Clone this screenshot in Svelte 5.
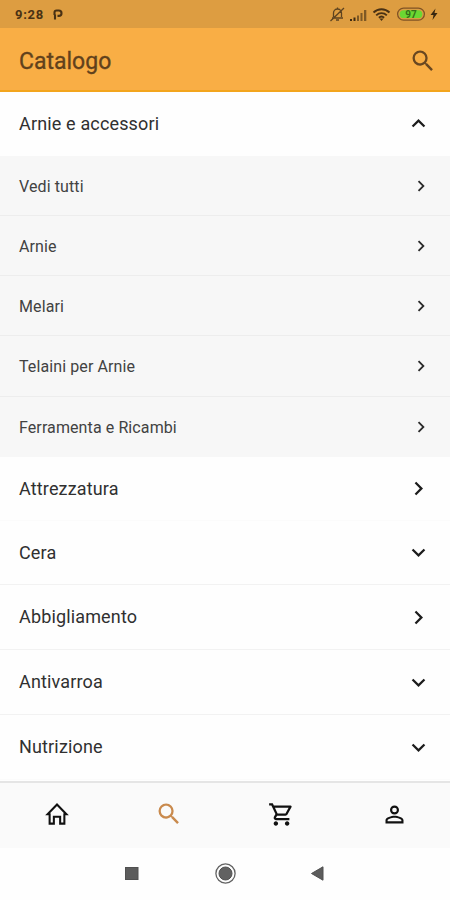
<script>
  const rows = [
    { label: 'Arnie e accessori', dir: 'up', h: 64 },
    { label: 'Vedi tutti', sub: true, dir: 'right', h: 60 },
    { label: 'Arnie', sub: true, dir: 'right', h: 60 },
    { label: 'Melari', sub: true, dir: 'right', h: 60 },
    { label: 'Telaini per Arnie', sub: true, dir: 'right', h: 61 },
    { label: 'Ferramenta e Ricambi', sub: true, last: true, dir: 'right', h: 60 },
    { label: 'Attrezzatura', dir: 'right', h: 64, faint: true },
    { label: 'Cera', dir: 'down', h: 64 },
    { label: 'Abbigliamento', dir: 'right', h: 65 },
    { label: 'Antivarroa', dir: 'down', h: 65 },
    { label: 'Nutrizione', dir: 'down', h: 65, faint: true }
  ];
  const chevrons = {
    up: 'M12 8l-6 6 1.41 1.41L12 10.83l4.59 4.58L18 14z',
    down: 'M16.59 8.59L12 13.17 7.41 8.59 6 10l6 6 6-6z',
    right: 'M10 6L8.59 7.41 13.17 12l-4.58 4.59L10 18l6-6z'
  };
  const searchPath =
    'M15.5 14h-.79l-.28-.27A6.471 6.471 0 0 0 16 9.5 6.5 6.5 0 1 0 9.5 16c1.61 0 3.09-.59 4.23-1.57l.27.28v.79l5 4.99L20.49 19l-4.99-5zm-6 0C7.01 14 5 11.99 5 9.5S7.01 5 9.5 5 14 7.01 14 9.5 11.99 14 9.5 14z';
  const tabs = [
    { name: 'Home', size: 26, outline: true, d: 'M3.300 12.300h1.900V20.900h3.900v-6.300h5.800v6.300h3.900v-8.600h1.900L12 3.200z' },
    { name: 'Cerca', size: 28, active: true, d: searchPath },
    { name: 'Carrello', size: 27, d: 'M15.55 13c.75 0 1.41-.41 1.75-1.03l3.58-6.49A.996.996 0 0 0 20.01 4H5.21l-.94-2H1v2h2l3.6 7.59-1.35 2.44C4.52 15.37 5.48 17 7 17h12v-2H7l1.1-2h7.45zM6.16 6h12.15l-2.76 5H8.53L6.16 6zM7 18c-1.1 0-1.99.9-1.99 2S5.9 22 7 22s2-.9 2-2-.9-2-2-2zm10 0c-1.1 0-1.99.9-1.99 2s.89 2 1.99 2 2-.9 2-2-.9-2-2-2z' },
    { name: 'Profilo', size: 27, d: 'M12 5.9a2.1 2.1 0 1 1 0 4.2 2.1 2.1 0 0 1 0-4.2m0 9c2.97 0 6.1 1.46 6.1 2.1v1.1H5.9V17c0-.64 3.13-2.1 6.1-2.1M12 4C9.79 4 8 5.79 8 8s1.79 4 4 4 4-1.79 4-4-1.79-4-4-4zm0 9c-2.67 0-8 1.34-8 4v3h16v-3c0-2.66-5.33-4-8-4z' }
  ];
</script>

<div class="screen">
  <div class="status">
    <span class="clock">9:28</span>
    <svg class="pmark" width="10" height="11" viewBox="0 0 10 11"><path d="M2 10.500V5.500M1.500 6V3.500Q1.500 1.500 3.500 1.500H5.800a2.700 2.700 0 0 1 0 5.400H4.500" fill="none" stroke="#493114" stroke-width="2.1" /></svg>
    <svg class="signals" width="112" height="20" viewBox="0 0 112 20">
      <g fill="none" stroke="#5d4320" stroke-width="1.3">
        <path d="M3 14h11M4.5 13V9a4 4 0 0 1 8 0v4M8.500 5V3.500M7 16h3M1.500 17L15 4" />
      </g>
      <g fill="#3f2b12">
        <path d="M21 15h2v2h-2zM24.500 13.500h2V17h-2z" />
        <path d="M28 11.500h2V17h-2zM31.500 9h2v8h-2zM35 6h2.300v11H35z" opacity=".6" />
      </g>
      <g fill="none" stroke="#493114" stroke-width="1.9">
        <path d="M44.500 8.500a11.500 11.500 0 0 1 16 0M47.200 11.300a7.500 7.500 0 0 1 10.600 0M49.900 13.800a3.800 3.800 0 0 1 5.200 0" />
      </g>
      <path d="M50.500 14.500h4l-2 2.500z" fill="#493114" />
      <rect x="68.600" y="4.100" width="26.800" height="12" rx="6" fill="#d99e43" stroke="#805325" stroke-width="1.300" />
      <rect x="70.700" y="6.200" width="22.600" height="7.900" rx="3.900" fill="#6bd832" />
      <text x="82" y="13.700" text-anchor="middle" font-size="10" font-weight="700" fill="#347018">97</text>
      <path d="M106.500 4.500l-5 6.500h3l-1 5 5-7h-3z" fill="#382710" />
    </svg>
  </div>
  <header>
    <h1>Catalogo</h1>
    <svg width="28" height="28" viewBox="0 0 24 24" fill="#694721"><path d={searchPath} /></svg>
  </header>
  <main>
    {#each rows as row}
      <div class="row" class:sub={row.sub} class:faint={row.faint} class:plain={row.dir === 'up' || row.last} style:height="{row.h}px">
        <span>{row.label}</span>
        <svg viewBox="0 0 24 24"><path d={chevrons[row.dir]} /></svg>
      </div>
    {/each}
  </main>
  <nav>
    {#each tabs as tab}
      <div class="tab" class:active={tab.active} aria-label={tab.name} role="img">
        <svg class:outline={tab.outline} width={tab.size} height={tab.size} viewBox="0 0 24 24"><path d={tab.d} /></svg>
      </div>
    {/each}
  </nav>
  <div class="system">
    <svg width="206" height="24" viewBox="0 0 206 24">
      <rect x="3.500" y="5.500" width="12.500" height="12" fill="#5c5c5c" stroke="#505050" />
      <circle cx="103.500" cy="11.500" r="9.600" fill="none" stroke="#626262" stroke-width="1.300" />
      <circle cx="103.500" cy="11.500" r="6.500" fill="#626262" stroke="#505050" />
      <path d="M189.500 11.500l11.500-6.700v13.400z" fill="#5c5c5c" stroke="#505050" />
    </svg>
  </div>
</div>

<style>
  :global(body) { margin: 0; background: #fff; }
  .screen { width: 450px; height: 900px; display: flex; flex-direction: column; overflow: hidden; background: #fefefe; font-family: Roboto, sans-serif; }
  .status { height: 28px; flex: none; box-sizing: border-box; display: flex; align-items: center; padding: 0 9px 0 15px; background: #dd9d41; }
  .clock { width: 38px; font-size: 13px; font-weight: 700; letter-spacing: .7px; color: #493114; padding-top: 1px; }
  .pmark { margin-top: 1px; }
  .signals { margin-left: auto; }
  header { height: 64px; flex: none; box-sizing: border-box; display: flex; align-items: center; justify-content: space-between; padding: 0 13px 0 19px; background: #f9ae45; border-bottom: 2px solid #f3a51d; }
  h1 { margin: 5px 0 0; font-size: 23px; line-height: 28px; font-weight: 400; letter-spacing: 0; color: #61411c; -webkit-text-stroke: .3px #61411c; }
  header svg { margin-top: 3px; }
  main { flex: none; height: 689px; }
  .row { box-sizing: border-box; display: flex; align-items: center; justify-content: space-between; padding: 0 18px 0 19px; border-bottom: 1px solid #f2f2f2; color: #303030; font-size: 18px; letter-spacing: .15px; }
  .row span { margin-top: -1px; }
  .row svg { width: 27px; height: 27px; fill: #1c1c1c; }
  .row.sub { background: #f7f7f7; border-color: #ededed; color: #424242; font-size: 16px; letter-spacing: .1px; }
  .row.sub span { margin-top: 1px; }
  .row.sub svg { width: 22px; height: 22px; fill: #2b2b2b; }
  .row.plain { border-color: transparent; }
  .row.faint { border-color: #fbfbfb; }
  nav { height: 67px; flex: none; box-sizing: border-box; display: flex; padding-bottom: 3px; background: #fafafa; border-top: 2px solid #e5e5e5; }
  .tab { flex: 1; display: flex; align-items: center; justify-content: center; padding-left: 1px; fill: #111; }
  .tab.active { fill: #c98a4d; padding-left: 0; }
  .outline { fill: none; stroke: #111; stroke-width: 1.9; }
  .system { flex: 1; display: flex; justify-content: center; padding-top: 14px; }
</style>
